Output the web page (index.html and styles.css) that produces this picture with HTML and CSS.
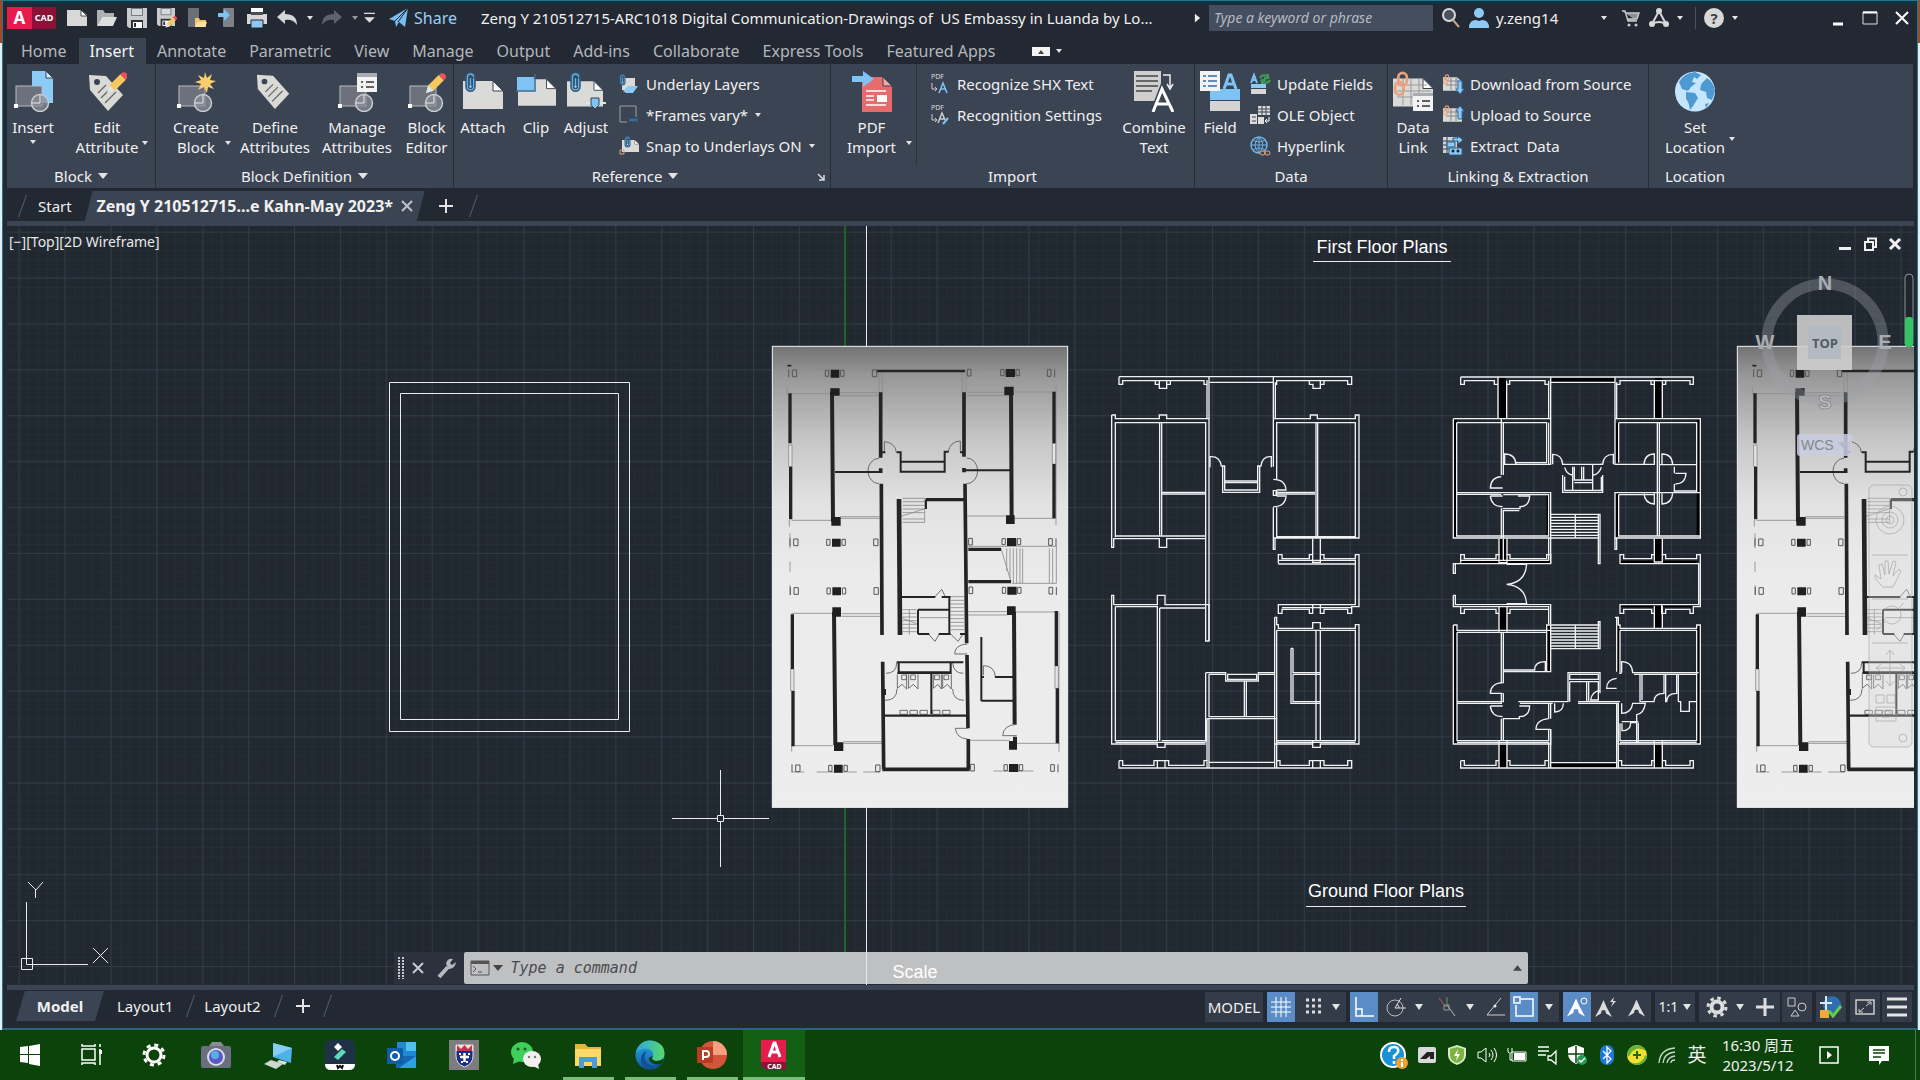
FILE: index.html
```html
<!DOCTYPE html>
<html lang="en">
<head>
    <meta charset="UTF-8">
    <meta name="viewport" content="width=device-width, initial-scale=1.0">
    <title>AutoCAD</title>
    <link rel="stylesheet" href="styles.css">
</head>
<body>
    <!-- shared icon parts -->
    <svg class="defs" aria-hidden="true">
        <defs>
            <symbol id="shapes" viewBox="0 0 40 41">
                <rect x="3" y="15" width="26" height="20" fill="#6c717b" stroke="#b8bcc2"/>
                <circle cx="27" cy="32" r="8.500" fill="#8b8f97" fill-opacity=".75" stroke="#c9ccd1" stroke-width="1.500"/>
                <path d="M27 24v8h-8" fill="none" stroke="#e8e8e8"/>
                <rect x="1" y="33" width="4" height="4" fill="#fff"/>
            </symbol>
            <symbol id="tag" viewBox="0 0 40 41">
                <path d="M2 4l17 1 17 19-15 16L3 19z" fill="#d9d9d6"/>
                <circle cx="10" cy="11" r="3" fill="#3b4453"/>
                <path d="M11 22l8-8M14 27l10-10M18 32l11-11" stroke="#666" stroke-width="1.300"/>
            </symbol>
            <symbol id="pencil" viewBox="0 0 20 20">
                <path d="M1 19l2-7L13 2l5 5L8 17z" fill="#f8c860"/>
                <path d="M13 2l2-1.500q2-1 4 1t.5 4L18 7z" fill="#e8545a"/>
                <path d="M1 19l2-7 5 5z" fill="#d8e6f2"/>
            </symbol>
            <symbol id="sheet" viewBox="0 0 40 30">
                <path d="M0 2h30l10 10v18H0z" fill="#dadad8"/>
                <path d="M30 2v10h10z" fill="#fff" stroke="#3b4453"/>
            </symbol>
            <symbol id="clip" viewBox="0 0 10 20">
                <path d="M8 6v8a3 3 0 0 1-6 0V5a3 3 0 0 1 6 0M5 6v7" fill="none" stroke="#2e5b80" stroke-width="4"/>
                <path d="M8 6v8a3 3 0 0 1-6 0V5a3 3 0 0 1 6 0M5 6v7" fill="none" stroke="#79b4e2" stroke-width="1"/>
            </symbol>
            <symbol id="chain" viewBox="0 0 16 24">
                <rect x="5" y="1.500" width="8" height="12" rx="4" fill="none" stroke="#e9a27b" stroke-width="2.500"/>
                <rect x="2" y="10" width="8" height="12" rx="4" fill="none" stroke="#e9a27b" stroke-width="2.500"/>
            </symbol>
            <symbol id="floppy" viewBox="0 0 20 20">
                <path d="M0 0h20v20H2l-2-2z" fill="#c9cbcc"/>
                <path d="M4 0h12v8H4z" fill="#777c82"/>
                <path d="M5 1h10v6H5z" fill="#d8d8d8"/>
                <path d="M4 12h12v8H4z" fill="#2b313b"/>
                <path d="M6 14h9v6H6z" fill="#fff"/>
                <path d="M7 15h2v4H7z" fill="#2b313b"/>
            </symbol>
            <symbol id="person" viewBox="0 0 20 20">
                <path d="M10 0l4 9 6 11-7-4-1-4H8l-1 4-7 4L6 9z"/>
            </symbol>

            <linearGradient id="shade" x1="0" y1="0" x2="0" y2="1">
                <stop offset="0" stop-color="#737373"/>
                <stop offset=".06" stop-color="#969696"/>
                <stop offset=".2" stop-color="#c6c6c6"/>
                <stop offset=".34" stop-color="#e2e2e2"/>
                <stop offset=".5" stop-color="#ebebeb"/>
                <stop offset="1" stop-color="#ededed"/>
            </linearGradient>
            <linearGradient id="edgeBlue" x1="0" y1="0" x2="0" y2="1">
                <stop offset="0" stop-color="#2ba7e0"/>
                <stop offset="1" stop-color="#0f5bab"/>
            </linearGradient>
            <linearGradient id="edgeGreen" x1="0" y1="0" x2="1" y2="0">
                <stop offset="0" stop-color="#2ba7e0"/>
                <stop offset="1" stop-color="#5bd86a"/>
            </linearGradient>
            <pattern id="minor" x="65" y="277.800" width="9.180" height="9.180" patternUnits="userSpaceOnUse">
                <path d="M.5 0V9.180M0 .5H9.180" stroke="#252d37"/>
            </pattern>
            <pattern id="major" x="64.500" y="277.500" width="45.900" height="45.900" patternUnits="userSpaceOnUse">
                <path d="M.5 0V45.900M0 .5H45.900" stroke="#313a45"/>
            </pattern>

            <g id="piers">
                <path d="M212-11h26v24h-26zM737-13h28v24h-28z" fill="#1f1f1f"/>
                <path d="M196-9h10v18h-10zM242-9h10v18h-10zM97-10h13v20H97zM337-10h13v20h-13zM622-12h11v20h-11zM722-11h10v18h-10zM768-11h10v18h-10zM862-11h11v20h-11zM86-12V12M884-12V12" fill="none" stroke="#555" stroke-width="3"/>
            </g>

            <!-- scanned first floor plan -->
            <g id="scan">
                <rect x="37" y="34" width="886" height="1383" fill="url(#shade)" stroke="#f4f4f4" stroke-width="3"/>
                <path d="M82 92h12" stroke="#222" stroke-width="5"/>
                <g fill="none" stroke="#8a8a8a" stroke-width="2.500">
                    <path d="M155 103h120M310 103h40M670 101h120M840 101h46M82 158v22M88 176h125" />
                    <path d="M240 173h118M240 182h118M622 172h112M622 181h112M765 171h122M888 150v420M88 555v20M90 595v45M90 680v30M90 750v30" />
                    <path d="M241 545h118M241 550h118M622 543h116M95 556h120M765 550h122M357 110v62M367 110v62M607 110v62M618 110v62" />
                    <path d="M86 330h10v65H86zM877 325h10v62h-10zM92 1002h10v66H92zM885 993h10v67h-10z" fill="#e5e5e5"/>
                    <path d="M95 835h125M245 836h116M245 844h116M625 830h116M625 840h116M768 831h125M95 1230v20M100 1232h120M250 1220h118M250 1225h118M632 1216h116M770 1225h130M897 830v420M170 1311h120M310 1311h50M700 1308h120M95 1311h38" />
                    <path d="M623 634h266V745H755M723 640l30 100M740 640v68M750 640v90M760 640v105M770 640v105M780 640v105M788 640v105M868 640v105M878 640v105" />
                    <path d="M428 490h66v72M428 500h66M428 511h66M428 522h66M428 533h66M420 545l75-24M428 552h66M428 562h66" />
                    <path d="M428 824h42M428 835h42M428 846h42M428 857h42M428 868h42M428 879h42M428 890h42M448 824v75M428 850l42 16M572 785h40M572 796h40M572 807h40M572 818h40M572 829h40M572 840h40M572 851h40M572 862h40M572 873h40M572 884h40M480 848h85" />
                </g>
                <g fill="none" stroke="#555" stroke-width="2.500">
                    <path d="M373 350V320A36 34 0 0 1 409 352M601 350V318A36 34 0 0 0 565 350" />
                    <path d="M357 370A33 38 0 0 0 324 408A33 38 0 0 0 357 446M620 369A33 38 0 0 1 653 407A33 38 0 0 1 620 446" />
                    <path d="M525 785l20-22 10 20M505 897l20 22 12-20M572 897l22 22 14-20M622 927q-38 2-38 30h38M378 1015q32 0 32-32M375 1096q36 0 36-34M610 1015q-30 0-32-32M612 1096q-34 0-34-34M622 1180h-36q4 30 36 32M670 1020V992q34 0 36 34M770 1168q-40 2-42 34h42" />
                    <path d="M412 1018v42l14-12 14 14V1018M446 1018v42l14-12 14 14V1018M520 1018v42l14-12 10 14V1018M548 1018v42l14-12 12 14V1018M425 1020h14v14h-14zM452 1020h14v14h-14zM524 1020h14v14h-14zM552 1020h14v14h-14zM420 1126h22v12h-22zM450 1126h22v12h-22zM480 1126h22v12h-22zM518 1126h22v12h-22zM548 1126h22v12h-22z" />
                </g>
                <g fill="none" stroke="#242424">
                    <path d="M90 175V325M92 395V553M882 170V325M882 387V550M97 838V1002M99 1068V1234M889 828V993M892 1060V1225" stroke-width="10"/>
                    <path d="M216 170L219 560M753 160L755 560M222 830L226 1230M762 830L764 1168M765 1205V1235" stroke-width="12"/>
                    <path d="M362 172V368M362 400V414M364 446L366 900M612 172V365M612 399V412M615 446L620 925M621 960L624 1180M625 1212V1303M368 980L371 1303M367 1303H629" stroke-width="11"/>
                    <path d="M350 108H615" stroke-width="8"/>
                    <path d="M417 492L420 900" stroke-width="14"/>
                    <path d="M497 494H612M625 643H723M625 740H753" stroke-width="10"/>
                    <path d="M498 494V522M225 411H360M612 406H750M366 352H376M410 352H422V410H554V350H566M600 352H612M425 380H552M425 786H526M545 786H572M568 786V897M474 824H565M474 824V897M474 897H508M536 897H572M600 897H615M410 982H610M416 982V1012H572V982M412 1014H575M514 1014V1138M664 906V1098M664 1097H760M705 1026H760M664 1026H672M375 1062V1080" stroke-width="6"/>
                    <path d="M372 1142H618" stroke-width="7"/>
                </g>
                <path d="M211 160h28v22h-28zM214 546h28v26h-28zM733 155h28v26h-28zM738 541h26v26h-26zM217 817h26v28h-26zM222 1222h28v26h-28zM741 814h26v26h-26zM747 1218h24v26h-24z" fill="#1f1f1f"/>
                <use href="#piers" y="115"/>
                <use href="#piers" x="4" y="622"/>
                <use href="#piers" x="5" y="768"/>
                <use href="#piers" x="10" y="1300"/>
            </g>
        </defs>
    </svg>

    <div class="desktop">
        <div class="window">
            <div class="window-edge"></div>

            <header class="titlebar">
                <button class="app-logo" aria-label="Application menu"><span class="app-a">A</span><span class="app-cad">CAD</span></button>
                <div class="quick-access">
                    <button aria-label="New"><svg viewBox="0 0 20 20"><path d="M0 2h14l6 5v11H0z" fill="#d8d8d6"/><path d="M14 2v6h6z" fill="#fff" stroke="#222933" stroke-width=".8"/></svg></button>
                    <button aria-label="Open"><svg viewBox="0 0 20 20"><path d="M0 18V2h6l2 3h9v4H5z" fill="#aeb1b3"/><path d="M5 9h15l-4 9H0z" fill="#dedede"/></svg></button>
                    <button aria-label="Save"><svg viewBox="0 0 20 20"><use href="#floppy"/></svg></button>
                    <button aria-label="Save as"><svg viewBox="0 0 20 20"><use href="#floppy" width="18" height="18"/><use href="#pencil" x="8" y="8" width="12" height="12"/></svg></button>
                    <button aria-label="Open from mobile"><svg viewBox="0 0 20 20"><rect x="1" width="11" height="19" rx="1" fill="#6b7077"/><path d="M8 19v-9h4l1 2h6v7z" fill="#f0c46a"/><path d="M10 14h10l-2 5H8z" fill="#ffe0a0"/></svg></button>
                    <button aria-label="Save to mobile"><svg viewBox="0 0 20 20"><rect x="6" width="11" height="19" rx="1" fill="#7d8288"/><path d="M1 5h6V1l6 6-6 6V9H1z" fill="#7cc4f5"/></svg></button>
                    <button aria-label="Plot"><svg viewBox="0 0 20 20"><path d="M4 0h12v5H4z" fill="#fff"/><path d="M0 6h20v10H0z" fill="#d6d6d6"/><path d="M4 4h12v3H4z" fill="#4a4f57"/><path d="M4 12h12v8H4z" fill="#8fc8f2" stroke="#222933"/></svg></button>
                    <button aria-label="Undo"><svg viewBox="0 0 20 20"><path d="M8 2v4q12 0 12 11-4-6-12-5v4L0 9z" fill="#d4d6d8"/></svg></button>
                    <button class="slim" aria-label="Undo list"><span class="caret"></span></button>
                    <button aria-label="Redo"><svg viewBox="0 0 20 20"><path d="M12 2v4Q0 6 0 17q4-6 12-5v4l8-7z" fill="#5d636c"/></svg></button>
                    <button class="slim dim" aria-label="Redo list"><span class="caret"></span></button>
                    <button class="slim" aria-label="Customize"><svg viewBox="0 0 12 12"><path d="M0 1h12M2 6h8l-4 4z" fill="#ddd" stroke="#ddd" stroke-width="1.500"/></svg></button>
                </div>
                <button class="share"><svg viewBox="0 0 20 20"><path d="M0 11L19 0l-3 19-6-5-3 5-1-6z" fill="#79bdf0"/><path d="M6 13L19 0 9 14" fill="none" stroke="#222933"/></svg>Share</button>
                <h1 class="doc-title">Zeng Y 210512715-ARC1018 Digital Communication-Drawings of&nbsp; US Embassy in Luanda by Lo...</h1>
                <div class="title-tools">
                    <button class="slim" aria-label="Collapse search"><svg viewBox="0 0 8 12"><path d="M1 1l6 5-6 5z" fill="#eee"/></svg></button>
                    <input class="search" type="text" aria-label="Search" placeholder="Type a keyword or phrase">
                    <button aria-label="Find"><svg viewBox="0 0 20 20"><circle cx="8" cy="7" r="6" fill="#4c525c" stroke="#d8d8d8" stroke-width="2"/><path d="M12 12l6 7" stroke="#c9a58c" stroke-width="2"/></svg></button>
                    <button class="account"><svg viewBox="0 0 20 20"><circle cx="10" cy="5" r="5" fill="#8ec9f6"/><path d="M0 20q0-8 7-8l3 1 3-1q7 0 7 8z" fill="#8ec9f6"/></svg>y.zeng14<span class="caret"></span></button>
                    <button aria-label="App store"><svg viewBox="0 0 20 20"><path d="M1 3h3l3 10h9M5 5h13l-2 6H7" fill="#8d9095" stroke="#c5c7c9" stroke-width="1.500"/><circle cx="8" cy="17" r="1.500" fill="#ccc"/><circle cx="15" cy="17" r="1.500" fill="#ccc"/></svg></button>
                    <button class="with-caret" aria-label="Autodesk app"><svg viewBox="0 0 20 20"><path d="M10 3l7 13q-7-4-14 0z" fill="none" stroke="#d8d8d8" stroke-width="2"/><circle cx="10" cy="3" r="3" fill="#d8d8d8"/><circle cx="3" cy="16" r="3" fill="#d8d8d8"/><circle cx="17" cy="16" r="3" fill="#d8d8d8"/></svg><span class="caret"></span></button>
                    <span class="divider"></span>
                    <button class="with-caret help" aria-label="Help"><span class="help-dot">?</span><span class="caret"></span></button>
                </div>
                <div class="window-buttons">
                    <button aria-label="Minimize"><svg viewBox="0 0 16 16"><path d="M3 14h10" stroke="#fff" stroke-width="3"/></svg></button>
                    <button aria-label="Maximize"><svg viewBox="0 0 16 16"><path d="M1 2h14v12H1z" fill="none" stroke="#ddd"/><path d="M1 2.500h14" stroke="#fff" stroke-width="2"/></svg></button>
                    <button aria-label="Close"><svg viewBox="0 0 16 16"><path d="M2 2l12 12M14 2L2 14" stroke="#fff" stroke-width="2"/></svg></button>
                </div>
            </header>

            <nav class="ribbon-tabs">
                <button>Home</button>
                <button class="active">Insert</button>
                <button>Annotate</button>
                <button>Parametric</button>
                <button>View</button>
                <button>Manage</button>
                <button>Output</button>
                <button>Add-ins</button>
                <button>Collaborate</button>
                <button>Express Tools</button>
                <button>Featured Apps</button>
                <button class="ribbon-toggle" aria-label="Minimize ribbon"><svg viewBox="0 0 18 9"><path d="M0 0h18v9H0z" fill="#f4f4f4"/><path d="M6 7l3-4 3 4z" fill="#444"/></svg><span class="caret"></span></button>
            </nav>

            <div class="ribbon">
                <section class="panel panel-block">
                    <div class="panel-body">
                        <button class="big"><svg viewBox="0 0 40 41"><path d="M19 0h14l7 7v25H19z" fill="#8ccbf7"/><path d="M33 0v7h7z" fill="#d8eefc" stroke="#3b4453"/><use href="#shapes" width="40" height="41"/></svg><span>Insert</span><span class="caret"></span></button>
                        <button class="big"><svg viewBox="0 0 40 41"><use href="#tag"/><use href="#pencil" x="19" y="1" width="22" height="22"/></svg><span>Edit<br>Attribute<i class="caret side"></i></span></button>
                    </div>
                    <h2>Block <span class="caret wide"></span></h2>
                </section>
                <section class="panel panel-definition">
                    <div class="panel-body">
                        <button class="big"><svg viewBox="0 0 40 41"><use href="#shapes"/><path d="M29 1l2 6 5-4-2 6 6 1-6 3 4 5-6-2-1 6-3-6-6 3 3-6-6-2 6-2-3-5 6 3z" fill="#f9cf6b"/></svg><span>Create<br>Block<i class="caret side far"></i></span></button>
                        <button class="big"><svg viewBox="0 0 40 41"><use href="#tag" width="38" height="39"/></svg><span>Define<br>Attributes</span></button>
                        <button class="big"><svg viewBox="0 0 40 41"><use href="#shapes"/><path d="M20 2h20v19H20z" fill="#f3f3f3"/><path d="M20 2h20v4H20z" fill="#a9adb2"/><path d="M24 11h2M24 16h2M29 11h8M29 16h8" stroke="#333" stroke-width="1.500"/></svg><span>Manage<br>Attributes</span></button>
                        <button class="big"><svg viewBox="0 0 40 41"><use href="#shapes"/><use href="#pencil" x="18" y="2" width="21" height="21"/></svg><span>Block<br>Editor</span></button>
                    </div>
                    <h2>Block Definition <span class="caret wide"></span></h2>
                </section>
                <section class="panel panel-reference">
                    <div class="panel-body">
                        <button class="big"><svg viewBox="0 0 40 41"><use href="#sheet" y="8" width="40" height="30"/><use href="#clip" x="2" y="1" width="11" height="21"/></svg><span>Attach</span></button>
                        <button class="big"><svg viewBox="0 0 40 41"><use href="#sheet" x="2" y="6" width="38" height="29"/><path d="M1 6h17v14H1z" fill="#7fc3f5"/><path d="M0 20h19V3" fill="none" stroke="#3b6d97" stroke-width="1.500"/></svg><span>Clip</span></button>
                        <button class="big"><svg viewBox="0 0 40 41"><use href="#sheet" x="1" y="8" width="36" height="28"/><use href="#clip" x="4" y="1" width="11" height="21"/><path d="M20 32h20" stroke="#dfe6ec" stroke-width="2"/><path d="M25 27h8v7l-4 4-4-4z" fill="#7fc3f5" stroke="#3b4453"/></svg><span>Adjust</span></button>
                        <div class="rows">
                            <button><svg viewBox="0 0 20 20"><path d="M3 4h13v12H3z" fill="#dadad8"/><path d="M4 17l5-5h10l-5 7H7z" fill="#8ccbf7"/><use href="#clip" width="7" height="12"/></svg>Underlay Layers</button>
                            <button><svg viewBox="0 0 20 20"><path d="M1 1h16v11M1 1v16h7" fill="none" stroke="#9a9fa8"/><path d="M10 17q4-6 9 0M10 13q4 6 9 0" fill="none" stroke="#2f7ec0"/></svg>*Frames vary*<span class="caret"></span></button>
                            <button><svg viewBox="0 0 20 20"><use href="#sheet" x="3" y="3" width="17" height="13"/><use href="#clip" x="5" width="7" height="12"/><path d="M1 14h4v4H1z" fill="none" stroke="#e0a080"/></svg>Snap to Underlays ON<span class="caret"></span></button>
                        </div>
                    </div>
                    <h2>Reference <span class="caret wide"></span><svg class="launcher" viewBox="0 0 8 8"><path d="M1 1l5 5M7 2v5H2" fill="none" stroke="#ddd" stroke-width="1.500"/></svg></h2>
                </section>
                <section class="panel panel-import">
                    <div class="panel-body">
                        <button class="big lined"><svg viewBox="0 0 40 41"><path d="M10 6h21l9 9v26H10z" fill="#e56b6d"/><path d="M31 6v9h9z" fill="#f2a5a4" stroke="#3b4453"/><path d="M14 20h20M14 34h20M14 25h8M14 29h8" stroke="#fff" stroke-width="1.500"/><path d="M25 24h10v7H25z" fill="#fff"/><path d="M0 5h11V0l11 8-11 8v-5H0z" fill="#7fc3f5"/></svg><span>PDF<br>Import<i class="caret side far"></i></span></button>
                        <div class="rows">
                            <button><svg viewBox="0 0 20 20"><text class="icon-pdf" x="1" y="5">PDF</text><path d="M2 9v6h5M5 13l2 2-2 2" fill="none" stroke="#ccc"/><path d="M9 19l4-10 4 10M11 15h5" fill="none" stroke="#7fc3f5" stroke-width="1.500"/></svg>Recognize SHX Text</button>
                            <button><svg viewBox="0 0 20 20"><text class="icon-pdf" x="1" y="5">PDF</text><path d="M2 9v6h5M5 13l2 2-2 2" fill="none" stroke="#ccc"/><path d="M8 18l4-10 3 7M10 14h5" fill="none" stroke="#ccc" stroke-width="1.500"/><path d="M13 19l5-6" stroke="#7fc3f5" stroke-width="2"/></svg>Recognition Settings</button>
                        </div>
                        <button class="big"><svg viewBox="0 0 40 41"><path d="M0 0h27v30H0z" fill="#cfcfcd"/><path d="M2 5h22M2 10h22M2 15h22M2 20h16" stroke="#444" stroke-width="1.500"/><path d="M29 4h7v12M33 13l3 5 3-5" fill="none" stroke="#eee" stroke-width="1.500"/><path d="M19 41l9-23 11 23M22 33h13" fill="none" stroke="#3b4453" stroke-width="6"/><path d="M19 41l9-23 11 23M22 33h13" fill="none" stroke="#fff" stroke-width="3"/></svg><span>Combine<br>Text</span></button>
                    </div>
                    <h2>Import</h2>
                </section>
                <section class="panel panel-data">
                    <div class="panel-body">
                        <button class="big"><svg viewBox="0 0 40 41"><path d="M10 18h30v11H10z" fill="#7fc3f5"/><path d="M10 30h30v10H10z" fill="#d4d4d2"/><path d="M0 0h20v20H0z" fill="#f3f3f3"/><path d="M3 5h3M3 10h3M3 15h3M8 5h9M8 10h9M8 15h9" stroke="#2e6fae" stroke-width="1.500"/><path d="M24 18l5-14h2l5 14M26 13h8" fill="none" stroke="#7fc3f5" stroke-width="3"/></svg><span>Field</span></button>
                        <div class="rows">
                            <button><svg viewBox="0 0 20 20"><path d="M1 9l3-8 3 8M2 6h4" fill="none" stroke="#7fc3f5" stroke-width="2"/><path d="M1 10h15v4H1z" fill="#8ccbf7"/><path d="M1 15h15v5H1z" fill="#d8d8d8"/><path d="M19 4a5 5 0 0 0-9 0M11 6a5 5 0 0 0 9 0M18 0v4h-4M12 10V6h4" fill="none" stroke="#3f9a55" stroke-width="2"/></svg>Update Fields</button>
                            <button><svg viewBox="0 0 20 20"><path d="M8 1h12v9H8zM0 9h7v10H0zM8 12h6v7H8z" fill="#dcdcda"/><path d="M8 4h12M8 7h12M12 1v9M16 1v9M2 12h4M2 16h4" stroke="#3b4453"/><path d="M19 12v4h-4M17 14l-2 2 2 2" fill="none" stroke="#fff"/></svg>OLE Object</button>
                            <button><svg viewBox="0 0 20 20"><circle cx="9" cy="9" r="8" fill="none" stroke="#6fb2e6" stroke-width="1.500"/><path d="M1 9h16M9 1v16M3 4q6 4 12 0M3 14q6-4 12 0M9 1q-8 8 0 16M9 1q8 8 0 16" fill="none" stroke="#6fb2e6"/><rect x="10" y="15" width="5" height="4" rx="2" fill="#3b4453" stroke="#e9a27b"/><rect x="15" y="15" width="5" height="4" rx="2" fill="none" stroke="#e9a27b"/></svg>Hyperlink</button>
                        </div>
                    </div>
                    <h2>Data</h2>
                </section>
                <section class="panel panel-linking">
                    <div class="panel-body">
                        <button class="big"><svg viewBox="0 0 40 41"><use href="#sheet" y="5" width="40" height="31"/><path d="M4 14h30M4 20h34M4 26h34M10 8v26M18 8v26M26 8v26" stroke="#999"/><use href="#chain" width="17" height="26"/><path d="M20 22h20v18H20z" fill="#f3f3f3"/><path d="M20 22h20v3H20z" fill="#a9adb2"/><path d="M24 30h2M24 35h2M29 30h8M29 35h8" stroke="#333" stroke-width="1.500"/></svg><span>Data<br>Link</span></button>
                        <div class="rows">
                            <button><svg viewBox="0 0 20 20"><use href="#sheet" y="2" width="19" height="15"/><path d="M3 7h14M3 11h14M8 4v12M13 4v12" stroke="#888"/><use href="#chain" width="7" height="11"/><path d="M15 7h4v8h2l-4 5-4-5h2z" fill="#8ccbf7" stroke="#2e6fae"/></svg>Download from Source</button>
                            <button><svg viewBox="0 0 20 20"><use href="#sheet" y="2" width="19" height="15"/><path d="M3 7h14M3 11h14M8 4v12M13 4v12" stroke="#888"/><use href="#chain" width="7" height="11"/><path d="M15 14h4V6h2l-4-5-4 5h2z" fill="#8ccbf7" stroke="#2e6fae"/></svg>Upload to Source</button>
                            <button><svg viewBox="0 0 20 20"><path d="M0 1h14v16H0z" fill="#cfd4d8"/><path d="M0 5h12M0 9h6M0 13h6M4 1v16" stroke="#3b4453"/><path d="M10 2h5V0l5 4-5 4V5h-5zM4 6h8v5H4zM6 12h13v7H6z" fill="#8ccbf7" stroke="#2e5b80"/><circle cx="10" cy="15" r="1.500" fill="#222"/><circle cx="15" cy="15" r="1.500" fill="#222"/></svg>Extract&nbsp; Data</button>
                        </div>
                    </div>
                    <h2>Linking &amp; Extraction</h2>
                </section>
                <section class="panel panel-location">
                    <div class="panel-body">
                        <button class="big"><svg viewBox="0 0 40 41"><circle cx="20" cy="20.500" r="20" fill="#c6e6fb"/><path d="M4 11Q9 2 20 1l6 3-4 4-3-2-2 5 4 1-5 4-3 4-6-2zM11 21l9 1 3 5-5 8-3 4q-1-8-4-11zM27 12l5-5q7 5 8 13l-3 9-5-2-1-6-6-2 1-5zM30 33l4-1-3 5z" fill="#4d9ad3"/></svg><span>Set<br>Location<i class="caret side up"></i></span></button>
                    </div>
                    <h2>Location</h2>
                </section>
            </div>

            <nav class="file-tabs">
                <span class="slash"></span>
                <button>Start</button>
                <button class="active"><span>Zeng Y 210512715...e Kahn-May 2023*</span><svg viewBox="0 0 12 12"><path d="M1 1l10 10M11 1L1 11" stroke="#bfc3c9" stroke-width="2"/></svg></button>
                <button class="add" aria-label="New drawing"><svg viewBox="0 0 16 16"><path d="M8 1v14M1 8h14" stroke="#e4e4e4" stroke-width="2"/></svg></button>
                <span class="slash"></span>
            </nav>

            <main class="canvas">
                <svg class="layer" aria-hidden="true">
                    <g transform="translate(-7 -226)">
                        <rect width="4000" height="3000" fill="url(#minor)"/>
                        <rect width="4000" height="3000" fill="url(#major)"/>
                    </g>
                </svg>

                <div class="command-line">
                    <svg class="grip" viewBox="0 0 6 22"><path d="M1 0v22M5 0v22" stroke="#c8cacd" stroke-width="2" stroke-dasharray="2 1"/></svg>
                    <button aria-label="Close command line"><svg viewBox="0 0 12 12"><path d="M1 1l10 10M11 1L1 11" stroke="#c8cacd" stroke-width="2"/></svg></button>
                    <button aria-label="Customize command line"><svg viewBox="0 0 20 20"><path d="M2 19l9-10" stroke="#b4b7bb" stroke-width="4"/><path d="M19 4l-4 3-2-2 3-4q-6-1-7 5l3 5q6 0 7-7z" fill="#b4b7bb"/></svg></button>
                    <div class="command-box">
                        <button aria-label="Recent commands"><svg viewBox="0 0 20 16"><path d="M1 1h18v14H1z" fill="none" stroke="#555"/><path d="M1 1h18v3H1z" fill="#555"/><path d="M3 6l3 3-3 3M8 12h4" fill="none" stroke="#555"/></svg><span class="caret"></span></button>
                        <input type="text" aria-label="Command" placeholder="Type a command">
                        <button aria-label="Command history"><svg class="tiny" viewBox="0 0 10 6"><path d="M0 6l5-6 5 6z" fill="#444"/></svg></button>
                    </div>
                </div>

                <svg class="layer drawing">
                    <g transform="translate(-7 -226)">
                        <path d="M845 226V952" stroke="#1c6527" stroke-width="2"/>
                        <g fill="none" stroke="#e8eaec">
                            <path d="M389.500 382.500h240v349h-240zM400.500 393.500h218v326h-218z"/>
                            <path d="M866.500 226V985M672 818.500h45M724 818.500h45M720.500 770v45M720.500 822v45M717.500 815.500h6v6h-6z"/>
                            <path d="M26.500 902V964.500H88M21.500 958.500h11v11h-11zM28 882l8 8 7-8M35.500 890v8M93 948l15 15M108 948l-15 15"/>
                            <path d="M1313 261.500h138M1306 906.500h160"/>
                        </g>
                        <text class="note" x="1382" y="253">First Floor Plans</text>
                        <text class="note" x="1386" y="897">Ground Floor Plans</text>
                        <text class="note" x="915" y="978">Scale</text>
                        <text class="view-label" x="9" y="247">[−][Top][2D Wireframe]</text>

                        <use href="#scan" transform="translate(760 335) scale(.33333)"/>
                        <use href="#scan" transform="translate(1725 335) scale(.33333)"/>

                        <!-- first floor, traced walls -->
                        <g transform="translate(1100 360) scale(.33333)" fill="none" stroke="#f0f1f3" stroke-width="4">
                            <path d="M57 50H755V73H743V62H530V73H525M57 50V73H68V62H312V73H322M328 67H520M166 62V73H178M178 62V85H200V62M200 73H211V62M628 62V73H639V85H661V62M661 73H672V62"/>
                            <path d="M321 60V176M327 50V176M520 50V176M526 67V176"/>
                            <path d="M35 165H46V176H178V165H200V176H327V843H317V188H46V532M35 165V562H41V536H178V562H200V536H317M46 528H317M179 188V528M185 188V528M185 397H317M185 402H317"/>
                            <path d="M520 176H631V165H652V176H766V165H777V534H520M520 176V320M530 358V188H766V530H530V442M520 442V568H525V534M648 188V530M653 188V530M526 397H645M526 402H645M520 392H530V406H520z"/>
                            <path d="M330 322V290Q360 288 364 318H374V390H473V318H483Q486 288 514 290V322M368 318V397H479V318M374 363H473M374 368H473"/>
                            <path d="M520 358Q556 358 558 390H530M530 408H558Q556 440 520 440"/>
                            <path d="M535 610V584H546V596H628V584H638V607H661V584H672V596H766V584H777V740H755V760H743V748H672V760H661V736M638 536V584M661 536V584M535 601H766V734H535V760H546V748H628V760H638V736M535 612H766M546 743H755"/>
                            <path d="M41 734V706H35V1152H172V1162H195V1152H317M41 734H172V706H195V734H327V843M46 740H172V1142H46V740M179 744V1142M179 744H317M185 1142H317M46 1147H317"/>
                            <path d="M57 1202H68V1216H162V1202H206V1216H312V1202H322M57 1202V1224H755V1202H743V1216H672V1202H628V1216H540V1202H530M172 1202V1224H195V1202M638 1202V1224H661V1202"/>
                            <path d="M317 938H377V963H475V938H524M317 938V1145M327 943H377M383 943H470V958H383zM475 943H524M327 943V1070H524M321 1076H530M433 965V1070M439 965V1070M321 1076V1224M327 1076V1224M327 1207H524"/>
                            <path d="M524 772H530V794H535V805H638V788H661V805H766V794H777V1152H661V1162H638V1152H524M524 772V1224M530 811V1142H766V811H530M648 811V1142M661 811V1142M530 1142V1224M530 1147H766"/>
                            <path d="M573 865V1030H661M579 865V938H661M579 943H661M579 943V1025H661M573 865H579M638 1142V1152"/>
                        </g>

                        <!-- first floor, furnished variant -->
                        <g transform="translate(1440 360) scale(.33333)" fill="none" stroke="#f0f1f3" stroke-width="4">
                            <path d="M176 52h22v124h-22zM645 52h20v124h-20zM179 536h20v72h-20zM645 536h20v70h-20zM179 738h20v77h-20zM645 738h20v67h-20zM179 1142h20v82h-20zM645 1142h20v82h-20zM332 52H525v14H332zM332 1208H530v14H332zM320 188h10v125h-10zM526 188h10v120h-10zM320 400h10v130h-10zM526 400h10v130h-10zM41 180h10v350H41zM770 180h10v350h-10zM41 795h10v355H41zM770 795h10v355h-10zM320 795h10v140h-10zM530 795h10v140h-10zM62 602H330v8H62zM540 602H770v8H540zM62 734H330v8H62zM540 734H770v8H540z" fill="#000" stroke="none"/>
                            <path d="M62 51H760V73H750V62H540V73H530M62 51V73H73V62H163V73H174M198 73H209V62H315V73H325M633 62V73H643M667 73H677V62H750M332 67H525M174 51V176M200 62V176M326 62V176M332 51V176M525 51V176M530 67V176M643 62V176M667 62V176"/>
                            <path d="M40 176H332V313H190M40 176V534H332V398H50M50 188H320V308H225M50 188V528H326V404H190M184 176V345M190 188V345M184 445V534M190 450V534M50 403H184M326 313V188"/>
                            <path d="M525 176H781V534H525V398H781M525 176V313H645M536 188H770V398M536 188V308M536 404H645M536 404V528H781M652 188V528M658 188V528M658 314H770M703 320V340M703 372V398M703 393H770"/>
                            <path d="M194 313V282Q226 282 228 313M338 313V283Q366 283 368 313H374M184 350Q152 352 151 384H188M151 408H188M151 408Q154 440 188 440M188 446H240V440Q268 440 269 408H234M188 452H238M520 313V283Q490 283 488 313H480M643 313V282Q614 282 612 313M666 313V282Q696 282 698 313M643 400V432Q614 430 612 400M666 400V432Q696 430 698 400M706 340H738Q736 372 706 372"/>
                            <path d="M368 313H488M368 345V397H488V345M374 350V391H484V350M398 320V391M403 320V360H458V320M403 368H458V391M425 320V360M431 320V360M458 313V391M374 322Q380 344 398 345M484 322Q476 344 460 345"/>
                            <path d="M332 463H480V611H475V463M332 472H475M332 481H475M332 490H475M332 499H475M332 508H475M332 517H475M332 526H475M332 534H475M406 463V534M525 534V568H530V534M326 534V602M332 534V610M190 536V602M177 536V608H201V536M643 536V606H667V536"/>
                            <path d="M62 608V584H73V596H168V584H179M200 584H210V596H320V584H332V611H40V640H46V611M62 601H326M540 611V584H551V596H635V584H645M665 584H677V596H770V584H781V740H760V760H750V748H677V760H665V736M540 611H776V734H540V760H551V748H635V760H645"/>
                            <path d="M40 706H46V734H332V793M40 706V740H326V793M62 740V760H73V748H168V760H177V738V815M201 738V815V760H210V748H326M643 738V805M667 738V805M200 613H260Q256 668 200 673Q256 678 260 731H200"/>
                            <path d="M40 795H51V811H332V795H320V935H190M40 795V1152H332V1108M51 817H320V900M51 817V1142H326V1108M184 817V970M190 817V970M190 930H284Q284 905 316 905V935H332V811M184 1000V1030H51M190 1000V1025H51"/>
                            <path d="M332 795H480V785H475V866M332 804H475M332 813H475M332 822H475M332 831H475M332 840H475M332 849H475M332 858H475M332 866H480V785M406 795V866M525 772H535V795H540V805H770V795H781V1152H535V1030M530 772V935M540 811H770V1142H540V1090M540 811V940H545"/>
                            <path d="M188 968Q152 970 151 1000H188M151 1038H188M151 1038Q154 1070 188 1070M188 1076H238V1070Q268 1070 269 1038H238M235 1025H384V938H480V1000M240 1030H338M326 1030V1076M332 1030V1076M326 1076Q288 1080 288 1108H330M344 1030V1056Q370 1056 370 1030M389 943H475V958H389zM389 965H475V1020H452Q456 995 478 992M389 965V1025M440 965V1025M446 965V1025M414 1025H540M414 1030H535V1224M530 1030V1224M332 1108V1224M326 1145V1224M190 1076V1142M184 1076V1142"/>
                            <path d="M530 955Q500 958 500 985H530M545 938V905Q576 905 578 938H776M582 943H770M600 943V1025H642Q642 1000 672 1000V943M606 943V1020M677 943V1025H680Q680 1000 710 1000V943M715 943V1025M715 1025H722V1054H748V1025H770M545 1030V1060Q574 1060 578 1030H616Q612 1060 590 1064V1088H572Q572 1112 546 1112V1090M590 1150V1088M595 1150V1088M545 1085H595"/>
                            <path d="M62 1202H73V1216H168V1202H179M200 1202H210V1216H315V1202H326M62 1202V1224H760V1202H750V1216H677V1202H665M645 1202H635V1216H545V1202H535M332 1208H530M177 1142V1224M201 1142V1224M643 1142V1224M667 1142V1224M51 1147H326M540 1147H770"/>
                        </g>
                    </g>
                </svg>

                <div class="view-buttons">
                    <button aria-label="Minimize view"><svg viewBox="0 0 14 14"><path d="M1 11.500h12" stroke="#f0f0f0" stroke-width="3"/></svg></button>
                    <button aria-label="Restore view"><svg viewBox="0 0 14 14"><path d="M2 5h8v8H2zM5 4V1.500h8V10h-2" fill="none" stroke="#f0f0f0" stroke-width="2"/></svg></button>
                    <button aria-label="Close view"><svg viewBox="0 0 14 14"><path d="M2 2l10 10M12 2L2 12" stroke="#f0f0f0" stroke-width="3"/></svg></button>
                </div>

                <svg class="view-cube" viewBox="0 0 160 520">
                    <circle cx="71" cy="69" r="58" fill="none" stroke="#9aa0a8" stroke-opacity=".38" stroke-width="11"/>
                    <rect x="43" y="42" width="55" height="55" fill="#d0d0d0" fill-opacity=".88"/>
                    <rect x="54" y="53" width="33" height="33" fill="#b3bac1"/>
                    <text class="cube-top" x="71" y="75">TOP</text>
                    <text class="compass" x="71" y="17">N</text>
                    <text class="compass" x="11" y="76">W</text>
                    <text class="compass" x="131" y="76">E</text>
                    <text class="compass outlined" x="71" y="136">S</text>
                    <rect x="43" y="161" width="55" height="22" rx="3" fill="#c9cce0" fill-opacity=".85"/>
                    <text class="wcs" x="47" y="177">WCS</text>
                    <path d="M84 169h10l-5 6z" fill="#b6b9cc"/>
                    <rect x="151" y="1" width="8" height="73" rx="4" fill="#20242b" stroke="#8d9096"/>
                    <rect x="151" y="44" width="8" height="30" rx="3" fill="#35c463"/>
                    <!-- faded navigation bar -->
                    <g fill="none" stroke="#8f8f8f" stroke-opacity=".5">
                        <rect x="115" y="212" width="43" height="262" rx="5" fill="#dcdcdc" fill-opacity=".35"/>
                        <circle cx="149" cy="219" r="4"/>
                        <circle cx="136" cy="247" r="14"/><circle cx="136" cy="247" r="8"/><circle cx="136" cy="247" r="4"/>
                        <path d="M118 282h36M118 326h36M118 370h36"/>
                        <path d="M129 314q-9-8-8-12l6 4-2-14 3-1 3 11v-14h3l1 13 4-13 3 1-3 14 6-7 2 2-8 16z"/>
                        <circle cx="138" cy="342" r="9"/><path d="M131 349l-8 8M144 336l6-6"/>
                        <path d="M136 378v34M123 395h28M132 382l4-5 4 5M132 408l4 5 4-5M127 391l-5 4 5 4M146 391l5 4-5 4"/>
                        <path d="M122 422h8v8h-8zM133 422h8v8h-8zM122 434h20v14h-20zM128 438h8v6h-8z"/>
                        <circle cx="149" cy="465" r="4"/>
                    </g>
                </svg>
            </main>

            <footer class="status">
                <nav class="layout-tabs">
                    <button class="active"><span>Model</span></button>
                    <button>Layout1</button>
                    <span class="slash"></span>
                    <button>Layout2</button>
                    <span class="slash"></span>
                    <button class="add" aria-label="New layout"><svg viewBox="0 0 16 16"><path d="M8 1v14M1 8h14" stroke="#e4e4e4" stroke-width="2"/></svg></button>
                    <span class="slash"></span>
                </nav>
                <div class="status-tools">
                    <button class="text">MODEL</button>
                    <button class="on" aria-label="Grid"><svg viewBox="0 0 22 22"><path d="M6 1v20M11 1v20M16 1v20M1 6h20M1 11h20M1 16h20" stroke="#fff"/></svg></button>
                    <button class="drop" aria-label="Snap"><svg viewBox="0 0 22 22"><path d="M4 4h16M4 10h16M4 16h16" stroke="#ddd" stroke-width="3" stroke-dasharray="3 3"/></svg><span class="caret"></span></button>
                    <button class="on" aria-label="Ortho"><svg viewBox="0 0 22 22"><path d="M3 1v19h18M3 13h6v7" fill="none" stroke="#fff" stroke-width="1.500"/></svg></button>
                    <button class="drop" aria-label="Polar tracking"><svg viewBox="0 0 22 22"><circle cx="10" cy="12" r="8" fill="none" stroke="#bbb"/><path d="M10 12L16 2M10 12h11M14 12q0-2-2-4" fill="none" stroke="#ddd"/></svg><span class="caret"></span></button>
                    <button class="drop" aria-label="Isodraft"><svg viewBox="0 0 22 22"><path d="M11 9l8 11" stroke="#bbb"/><path d="M11 1v10" stroke="#5b9a5b"/><path d="M3 2l7 9" stroke="#c05a5a"/><path d="M8 9h5v5H8z" fill="none" stroke="#999"/></svg><span class="caret"></span></button>
                    <button aria-label="Snap tracking"><svg viewBox="0 0 22 22"><path d="M17 2L3 19h18" fill="none" stroke="#ccc"/><circle cx="11" cy="10" r="1.500" fill="#eee"/></svg></button>
                    <button class="on" aria-label="Object snap"><svg viewBox="0 0 22 22"><path d="M8 3h12v17H3V9" fill="none" stroke="#fff" stroke-width="1.500"/><path d="M1 1h6v6H1z" fill="none" stroke="#fff" stroke-width="1.500"/></svg></button>
                    <button class="slim" aria-label="Object snap list"><span class="caret"></span></button>
                    <button class="on" aria-label="Annotation visibility"><svg viewBox="0 0 22 22"><use href="#person" x="1" y="2" width="18" height="19" fill="#fff"/><circle cx="18" cy="5" r="3" fill="none" stroke="#fff"/></svg></button>
                    <button aria-label="Auto scale"><svg viewBox="0 0 22 22"><use href="#person" y="4" width="17" height="17" fill="#ddd"/><path d="M19 1l-4 5h3l-2 5 5-6h-3z" fill="#ddd"/></svg></button>
                    <button aria-label="Annotation scale"><svg viewBox="0 0 22 22"><use href="#person" x="3" y="3" width="17" height="18" fill="#ddd"/></svg></button>
                    <button class="text scale">1:1<span class="caret"></span></button>
                    <button class="drop" aria-label="Workspace"><svg viewBox="0 0 22 22"><circle cx="11" cy="11" r="5.500" fill="none" stroke="#ddd" stroke-width="4"/><circle cx="11" cy="11" r="9" fill="none" stroke="#ddd" stroke-width="3" stroke-dasharray="3.500 3.570"/></svg><span class="caret"></span></button>
                    <button aria-label="Monitor"><svg viewBox="0 0 22 22"><path d="M11 2v18M2 11h18" stroke="#ddd" stroke-width="3"/></svg></button>
                    <button class="apart" aria-label="Isolate objects"><svg viewBox="0 0 22 22"><path d="M2 2h7v8H2zM5 20l4-6 4 6z" fill="none" stroke="#ccc"/><circle cx="16" cy="11" r="4" fill="none" stroke="#ccc"/></svg></button>
                    <button class="apart" aria-label="Hardware"><svg viewBox="0 0 22 22"><circle cx="12" cy="9" r="9" fill="#2f6fb0"/><path d="M6 0v14M0 7h12" stroke="#dfe8f0" stroke-width="2"/><path d="M0 14h9v8H0z" fill="#f2a93b"/><path d="M9 15l4 5 8-10" fill="none" stroke="#5fce4f" stroke-width="3"/></svg></button>
                    <button class="apart" aria-label="Clean screen"><svg viewBox="0 0 22 22"><path d="M2 4h18v14H2z" fill="none" stroke="#ccc" stroke-width="1.500"/><path d="M12 10l5-4M13 6h4v3M10 12l-5 4M5 13v3h4" fill="none" stroke="#ccc"/></svg></button>
                    <button aria-label="Customization"><svg viewBox="0 0 22 22"><path d="M1 3h20M1 11h20M1 19h20" stroke="#e4e4e4" stroke-width="3"/></svg></button>
                </div>
            </footer>
        </div>

        <div class="taskbar">
            <div class="apps">
                <button aria-label="Start menu"><svg viewBox="0 0 30 30"><path d="M5 7l8-1v8H5zM14 6l11-2v10H14zM5 15h8v8l-8-1zM14 15h11v11l-11-2z" fill="#fff"/></svg></button>
                <button aria-label="Task view"><svg viewBox="0 0 30 30"><path d="M5 9h13v11H5zM5 4v2h13V4M5 25v-2h13v2M23 4v3M23 9v16" fill="none" stroke="#fff" stroke-width="1.500"/><path d="M22 10h3v4h-3z" fill="#fff"/></svg></button>
                <button aria-label="Settings"><svg viewBox="0 0 30 30"><circle cx="15" cy="15" r="7" fill="none" stroke="#fff" stroke-width="3"/><circle cx="15" cy="15" r="10" fill="none" stroke="#fff" stroke-width="3" stroke-dasharray="4 3.850"/></svg></button>
                <button aria-label="Camera"><svg viewBox="0 0 30 30"><rect y="6" width="30" height="22" rx="2" fill="#6b6e7d"/><path d="M8 6l3-4h9l3 4z" fill="#8a8d99"/><circle cx="15" cy="17" r="9" fill="#d6dbe6"/><circle cx="15" cy="17" r="7" fill="#5b58c9"/><circle cx="14" cy="15" r="4" fill="#58aee8"/></svg></button>
                <button aria-label="Remote PC"><svg viewBox="0 0 30 30"><path d="M10 3l19 5-1 15-18-6z" fill="#4db1ea"/><path d="M10 3l19 5-19 9z" fill="#85cdf5"/><path d="M16 20l8 2-2 3-8-3z" fill="#d9e0e4"/><path d="M1 24l7-4 12 4-7 5z" fill="#cdd6cf"/></svg></button>
                <button aria-label="Filmora"><svg viewBox="0 0 30 30"><rect width="30" height="30" rx="5" fill="#1f3144"/><path d="M13 3l4 4-4 4-4-4z" fill="#fff"/><path d="M17 9l4 3-8 8-4-3z" fill="#5fd8bd"/><path d="M0 24h30q0 6-6 6H6q-6 0-6-6z" fill="#fff"/><path d="M12 25l1 3 2-2 2 2 1-3" fill="none" stroke="#111" stroke-width="2"/></svg></button>
                <button aria-label="Outlook"><svg viewBox="0 0 30 30"><path d="M10 2h19v25H10z" fill="#1e8ad6"/><path d="M19 2h10v9H19z" fill="#50c0f3"/><path d="M9 16h20v12H9z" fill="#1467b0"/><path d="M29 16v12H12z" fill="#2f9fe6"/><rect y="8" width="16" height="16" rx="1" fill="#0f5fa8"/><circle cx="8" cy="16" r="4" fill="none" stroke="#fff" stroke-width="2"/></svg></button>
                <button aria-label="University"><svg viewBox="0 0 30 30"><path d="M0 0h30v30H0z" fill="#7d7d7d"/><path d="M7 5h17v11q0 8-8.500 11Q7 24 7 16z" fill="#1c2d8d" stroke="#ddd"/><path d="M7 5h17v6H7z" fill="#e8e4e6"/><path d="M8 5l4 4 3.500-4L19 9l4-4v6H8z" fill="#d02f42"/><path d="M15.500 13v9M11 17h9" stroke="#fff" stroke-width="2.500"/><path d="M10 13h2v2h-2zM19 13h2v2h-2zM12 21h2v2h-2zM17 21h2v2h-2z" fill="#fff"/></svg></button>
                <button aria-label="WeChat"><svg viewBox="0 0 30 30"><ellipse cx="11" cy="12" rx="11" ry="10" fill="#3ecf5a"/><path d="M3 18l-1 6 7-3z" fill="#3ecf5a"/><ellipse cx="21" cy="19" rx="9" ry="8" fill="#f0f0f0"/><path d="M27 24l1 5-6-3z" fill="#f0f0f0"/><circle cx="7" cy="9" r="1.500" fill="#145c22"/><circle cx="14" cy="9" r="1.500" fill="#145c22"/><circle cx="18" cy="17" r="1.200" fill="#777"/><circle cx="24" cy="17" r="1.200" fill="#777"/></svg></button>
                <button class="open" aria-label="File explorer"><svg viewBox="0 0 30 30"><path d="M2 4h10l3 3h13v19H2z" fill="#e8b33a"/><path d="M2 9h26v17H2z" fill="#fbd867"/><path d="M6 17h18v11h-5v-6h-8v6H6z" fill="#4a9bd8"/></svg></button>
                <button class="open" aria-label="Edge"><svg viewBox="0 0 30 30"><circle cx="15" cy="15" r="14.500" fill="url(#edgeBlue)"/><path d="M1 13Q4 .5 15 .5 29 2 29.500 13q0 8-8 8-6 0-4-4 2-5-3-8Q7 7 1 13z" fill="url(#edgeGreen)"/><path d="M12 11q-5 6 0 12 6 5 14 1-4 6-12 5Q5 27 6 18q1-6 6-7z" fill="#134f96"/><path d="M18 16q-3 4 3 5 5 0 8-3-1 4-3 6-8 2-12-4-1-3 4-4z" fill="#0b430b"/></svg></button>
                <button class="open" aria-label="PowerPoint"><svg viewBox="0 0 30 30"><circle cx="16" cy="15" r="14" fill="#d3543a"/><path d="M16 1a14 14 0 0 1 14 14H16z" fill="#f5a080"/><rect y="7" width="16" height="16" rx="1" fill="#b93b22"/><path d="M6 20v-9h3q3 0 3 3t-3 3H6" fill="none" stroke="#fff" stroke-width="2"/></svg></button>
                <button class="open current" aria-label="AutoCAD"><svg viewBox="0 0 30 30"><path d="M2 0h25v22H2z" fill="#e51c4c"/><path d="M4 22h23v8H8l-6-4v-4z" fill="#8f1235"/><path d="M10 17l5-14h1l5 14M12 12h7" fill="none" stroke="#fff" stroke-width="3"/><text class="icon-cad" x="15.500" y="29">CAD</text></svg></button>
            </div>
            <div class="tray">
                <button class="tray-help" aria-label="Help center"><svg viewBox="0 0 28 28"><circle cx="13" cy="14" r="12" fill="#1990d8" stroke="#fff" stroke-width="2"/><path d="M9 11q0-5 5-5t4 5q-1 2-4 4v3M14 20v3" fill="none" stroke="#fff" stroke-width="2.500"/><circle cx="22" cy="22" r="6" fill="#f0a030"/><path d="M22 18v2M22 21v5" stroke="#fff" stroke-width="2"/></svg></button>
                <button aria-label="Autodesk"><svg viewBox="0 0 20 20"><rect x="1" y="2" width="18" height="16" rx="2" fill="#d9d9dc"/><path d="M3 14l7-7h7v7h-4v-3l-4 3z" fill="#222"/></svg></button>
                <button aria-label="Security"><svg viewBox="0 0 20 20"><path d="M10 0l9 3v7q0 7-9 10Q1 17 1 10V3z" fill="#dfe8c8"/><path d="M10 2l7 2v6q0 6-7 8-7-2-7-8V4z" fill="#7cb342"/><path d="M11 4l-4 7h3l-1 5 4-7h-3z" fill="#fff"/></svg></button>
                <button aria-label="Volume"><svg viewBox="0 0 20 20"><path d="M1 7h3l5-4v14l-5-4H1zM12 8q2 2 0 4M14 5q4 5 0 10M17 3q5 7 0 14" fill="none" stroke="#fff"/></svg></button>
                <button aria-label="Battery"><svg viewBox="0 0 20 20"><path d="M5 7h14v9H5zM1 3v4q2 3 4 0V3M3 9v6h2" fill="none" stroke="#fff"/><path d="M7 8h11v7H7z" fill="#fff"/></svg></button>
                <button aria-label="Audio console"><svg viewBox="0 0 20 20"><path d="M1 2h11M1 6h11M1 10h8M11 11h3l5-5v13l-5-4h-3z" fill="none" stroke="#fff" stroke-width="1.300"/></svg></button>
                <button aria-label="Defender"><svg viewBox="0 0 20 20"><path d="M9 0l8 3v6q0 6-8 10Q1 15 1 9V3z" fill="#fff"/><path d="M9 1v17M1 9h16" stroke="#0b430b" stroke-width="1.500"/><circle cx="15" cy="15" r="5" fill="#1f9d55"/><path d="M12 15l2 2 4-4" fill="none" stroke="#fff" stroke-width="1.500"/></svg></button>
                <button aria-label="Bluetooth"><svg viewBox="0 0 20 20"><rect x="3" width="14" height="20" rx="7" fill="#1b78d8"/><path d="M6 6l8 8-4 4V2l4 4-8 8" fill="none" stroke="#fff" stroke-width="1.300"/></svg></button>
                <button aria-label="Safe guard"><svg viewBox="0 0 20 20"><circle cx="10" cy="10" r="10" fill="#f2df2e"/><path d="M0 10A10 10 0 0 1 19 6Q10 0 4 8q-2 5-4 2zM20 11A10 10 0 0 1 3 17q9 4 14-4 1-4 3-2z" fill="#5fb53a"/><path d="M10 6v8M6 10h8" stroke="#176b1c" stroke-width="2"/></svg></button>
                <button aria-label="Wireless"><svg viewBox="0 0 20 20"><path d="M2 18Q3 4 18 3M6 18Q7 8 18 7M10 18q1-6 8-7M14 18q0-3 4-3" fill="none" stroke="#c8d8c8" stroke-width="1.300"/></svg></button>
                <button class="ime">英</button>
                <div class="clock"><span>16:30 周五</span><span>2023/5/12</span></div>
                <button class="tray-wide" aria-label="Media"><svg viewBox="0 0 20 20"><path d="M1 2h18v16H1z" fill="none" stroke="#fff" stroke-width="1.500"/><path d="M8 6l5 4-5 4z" fill="#fff"/></svg></button>
                <button class="tray-wide" aria-label="Notifications"><svg viewBox="0 0 20 20"><path d="M0 1h20v15h-7l-3 4v-4H0z" fill="#fff"/><path d="M4 5h12M4 8h12M4 12h8" stroke="#0b430b" stroke-width="1.500"/></svg></button>
                <span class="show-desktop"></span>
            </div>
        </div>
    </div>
</body>
</html>
```

FILE: styles.css
```css
* {
    box-sizing: border-box;
}

body {
    margin: 0;
    font-family: "Noto Sans", "Noto Sans CJK SC", sans-serif;
    font-size: 15px;
    line-height: 20px;
    color: #f0f0f0;
    background: #222933;
}

button {
    margin: 0;
    padding: 0;
    border: 0;
    background: none;
    color: inherit;
    font: inherit;
    display: flex;
    align-items: center;
    justify-content: center;
}

input {
    border: 0;
    outline: none;
    font: inherit;
}

h1, h2 {
    margin: 0;
    font-size: 15px;
    font-weight: 400;
}

svg {
    display: block;
    flex: none;
}

.defs {
    position: absolute;
    width: 0;
    height: 0;
}

.desktop {
    display: flex;
    flex-direction: column;
    height: 100vh;
    background: linear-gradient(#a04a2c 43px, #e6eef4 43px);
}

.window {
    flex: 1;
    min-height: 0;
    display: flex;
    flex-direction: column;
    margin: 0 2px;
    background: #222933;
    border: 1px solid #23798c;
    border-top: 0;
    border-bottom: 2px solid #2c627c;
}

.window-edge {
    height: 5px;
    border-top: 1px solid #23798c;
    border-bottom: 1px solid #222933;
    background: #0e3344;
}

.caret {
    flex: none;
    display: inline-block;
    border: 3px solid transparent;
    border-top: 4px solid #e4e4e4;
    border-bottom: 0;
}

.caret.wide {
    border-width: 5px;
    border-top-width: 6px;
    border-bottom: 0;
}

.slash {
    width: 1px;
    height: 22px;
    background: #59606b;
    transform: skewX(-20deg);
}

/* title bar */
.titlebar {
    display: flex;
    align-items: center;
    height: 31px;
    padding: 0 7px 6px 4px;
}

.titlebar svg {
    width: 20px;
    height: 20px;
}

.app-logo {
    width: 49px;
    height: 22px;
    background: linear-gradient(90deg, #e51c4c 25px, #8a1236 25px);
    font-weight: 700;
    color: #fff;
}

.app-a {
    width: 25px;
    font-size: 17px;
}

.app-cad {
    width: 24px;
    font-size: 9px;
}

.quick-access {
    display: flex;
    align-items: center;
    gap: 10px;
    margin-left: 11px;
}

.quick-access .slim {
    width: 7px;
    margin: 0 -1px;
}

.quick-access .slim svg {
    width: 11px;
    height: 12px;
}

.dim {
    opacity: .6;
}

.share {
    gap: 5px;
    margin-left: 17px;
    color: #9bd0f7;
    font-size: 16px;
}

.doc-title {
    flex: 1;
    min-width: 0;
    margin-left: 24px;
    white-space: nowrap;
}

.title-tools {
    display: flex;
    align-items: center;
    gap: 8px;
}

.title-tools .slim svg {
    width: 7px;
    height: 12px;
}

.search {
    width: 224px;
    height: 26px;
    padding: 0 5px;
    background: #454e5e;
    color: #f0f0f0;
    font-size: 14px;
    font-style: italic;
}

.search::placeholder {
    color: #b5bac2;
    opacity: 1;
}

.account {
    width: 138px;
    gap: 7px;
    margin-right: 6px;
    justify-content: flex-start;
}

.account .caret {
    margin-left: auto;
}

.with-caret {
    gap: 8px;
}

.divider {
    width: 1px;
    height: 22px;
    margin-left: 4px;
    background: #4b525d;
}

.help-dot {
    width: 20px;
    height: 20px;
    border-radius: 10px;
    background: #d8d8d6;
    color: #3b4453;
    font-weight: 700;
}

.window-buttons {
    display: flex;
    gap: 16px;
    margin-left: 92px;
}

.window-buttons svg {
    width: 16px;
    height: 16px;
}

/* ribbon */
.ribbon-tabs {
    display: flex;
    height: 28px;
    padding: 2px 0 0 7px;
    color: #b4b7bc;
    font-size: 16px;
}

.ribbon-tabs button {
    height: 26px;
    padding: 0 12px 0 11px;
}

.ribbon-tabs .active {
    background: #3b4453;
    color: #f4f4f4;
}

.ribbon-tabs .ribbon-toggle {
    gap: 6px;
    margin-left: 14px;
}

.ribbon-toggle svg {
    width: 18px;
    height: 9px;
}

.ribbon {
    display: flex;
    height: 124px;
    margin: 0 4px;
    background: #3b4453;
}

.panel {
    display: flex;
    flex-direction: column;
    border-right: 1px solid #262d38;
}

.panel-body {
    display: grid;
    height: 101px;
}

.panel h2 {
    display: flex;
    align-items: center;
    justify-content: center;
    gap: 6px;
    height: 22px;
}

.panel-block {
    width: 149px;
}

.panel-block .panel-body {
    grid-template-columns: 52px 1fr;
}

.panel-definition {
    width: 298px;
}

.panel-definition .panel-body {
    grid-template-columns: 80px 78px 86px 1fr;
}

.panel-reference {
    width: 377px;
}

.panel-reference .panel-body {
    grid-template-columns: 58px 48px 52px 1fr;
}

.panel-import {
    width: 364px;
}

.panel-import .panel-body {
    grid-template-columns: 86px 1fr 80px;
}

.panel-data {
    width: 193px;
}

.panel-linking {
    width: 261px;
}

.panel-data .panel-body,
.panel-linking .panel-body {
    grid-template-columns: 50px 1fr;
}

.panel-location {
    width: 92px;
    border-right: 0;
}

.panel-reference h2 {
    position: relative;
    padding-right: 14px;
}

.launcher {
    position: absolute;
    right: 5px;
    top: 8px;
    width: 8px;
    height: 8px;
}

.big {
    flex-direction: column;
    justify-content: flex-start;
    padding-top: 7px;
    text-align: center;
    white-space: nowrap;
}

.big svg {
    width: 40px;
    height: 41px;
    margin-bottom: 5px;
}

.big > .caret {
    margin-top: 3px;
}

.side {
    margin: 0 -10px 8px 4px;
}

.side.far {
    margin: 0 -16px 8px 10px;
}

.side.up {
    margin-bottom: 12px;
}

.lined {
    border-right: 1px solid #2c333f;
    padding-right: 4px;
}

.rows {
    display: flex;
    flex-direction: column;
    padding: 4px 0 0 7px;
    white-space: nowrap;
}

.panel-import .rows {
    padding-left: 13px;
}

.panel-data .rows,
.panel-linking .rows {
    padding-left: 5px;
}

.rows button {
    height: 31px;
    gap: 7px;
    justify-content: flex-start;
}

.rows svg {
    width: 20px;
    height: 20px;
    overflow: visible;
}

.icon-pdf {
    font-size: 7px;
    fill: #ddd;
}

.icon-cad {
    font-size: 7px;
    font-weight: 700;
    text-anchor: middle;
    fill: #fff;
}

/* drawing tabs */
.file-tabs {
    display: flex;
    align-items: center;
    height: 33px;
    padding: 3px 15px 0 19px;
}

.file-tabs button {
    height: 30px;
}

.file-tabs > button:nth-child(2) {
    margin: 0 13px 0 15px;
}

.file-tabs .active {
    width: 340px;
    gap: 8px;
    font-size: 16px;
    font-weight: 700;
    background: #3b4453;
    clip-path: polygon(8px 0, 100% 0, calc(100% - 8px) 100%, 0 100%);
}

.file-tabs .active svg {
    width: 12px;
    height: 12px;
}

.file-tabs .add {
    margin: 0 19px 0 13px;
}

.add svg {
    width: 16px;
    height: 16px;
}

/* drawing area */
.canvas {
    flex: 1;
    min-height: 0;
    position: relative;
    margin: 0 3px 0 4px;
    overflow: hidden;
    border-top: 5px solid #3b4453;
    border-bottom: 5px solid #3b4453;
    background: #212830;
}

.layer {
    position: absolute;
    inset: 0;
    width: 100%;
    height: 100%;
}

.drawing {
    pointer-events: none;
}

.note {
    font-family: "Liberation Sans", sans-serif;
    font-size: 18px;
    text-anchor: middle;
    fill: #fff;
}

.view-label {
    font-size: 14px;
    fill: #e8e8e8;
}

.command-line {
    position: absolute;
    bottom: 1px;
    left: 50%;
    transform: translateX(-50%);
    display: flex;
    align-items: center;
    width: 1134px;
    height: 32px;
    padding-left: 4px;
    background: #2b313d;
}

.grip {
    width: 6px;
    height: 22px;
}

.command-line > button svg {
    width: 12px;
    height: 12px;
    margin-left: 8px;
}

.command-line > button + button svg {
    width: 20px;
    height: 20px;
    margin-left: 13px;
}

.command-box {
    flex: 1;
    display: flex;
    align-items: center;
    height: 32px;
    margin-left: 7px;
    padding: 0 6px;
    border-radius: 2px;
    background: #bfc0c2;
}

.command-box button {
    gap: 3px;
}

.command-box button svg {
    width: 20px;
    height: 16px;
}

.command-box .tiny {
    width: 9px;
    height: 6px;
}

.command-box .caret {
    border-width: 5px;
    border-top: 6px solid #444;
    border-bottom: 0;
}

.command-box input {
    flex: 1;
    padding: 0 8px;
    background: none;
    font: italic 15px "DejaVu Sans Mono", monospace;
}

.command-box input::placeholder {
    color: #4a4c50;
    opacity: 1;
}

.view-buttons {
    position: absolute;
    top: 11px;
    right: 12px;
    display: flex;
    gap: 11px;
}

.view-buttons svg {
    width: 14px;
    height: 14px;
}

.view-cube {
    position: absolute;
    top: 47px;
    right: 0;
    width: 160px;
    height: 520px;
}

.compass {
    font: 700 20px "Liberation Sans", sans-serif;
    text-anchor: middle;
    fill: #a9adb3;
}

.compass.outlined {
    fill: #c9c9c9;
    stroke: #8b8b8b;
}

.cube-top {
    font: 700 13px "Open Sans", sans-serif;
    text-anchor: middle;
    fill: #545a62;
}

.wcs {
    font: 14px "Liberation Sans", sans-serif;
    fill: #85888f;
}

/* status bar */
.status {
    display: flex;
    justify-content: space-between;
    height: 38px;
    padding: 0 5px 0 13px;
}

.layout-tabs {
    display: flex;
    align-items: center;
    height: 32px;
}

.layout-tabs button {
    height: 30px;
    padding: 0 17px 0 13px;
}

.layout-tabs .active {
    width: 88px;
    padding: 0;
    font-weight: 700;
    background: #3b4453;
    clip-path: polygon(9px 0, 100% 0, calc(100% - 9px) 100%, 0 100%);
}

.layout-tabs .add {
    padding: 0 16px;
}

.status-tools {
    display: flex;
    align-items: center;
    height: 32px;
    padding-top: 2px;
}

.status-tools button {
    width: 30px;
    height: 30px;
    background: #343c49;
}

.status-tools svg {
    width: 22px;
    height: 22px;
}

.status-tools .text {
    width: 58px;
    margin-right: 4px;
}

.status-tools .scale {
    width: 40px;
    gap: 5px;
    margin: 0 4px;
    font-size: 14px;
}

.status-tools .on {
    width: 28px;
    background: #5b8cc5;
}

.status-tools .drop {
    width: 51px;
    gap: 8px;
}

.status-tools .drop + .on {
    margin-left: 4px;
}

.status-tools .slim {
    width: 21px;
    margin-right: 4px;
}

.status-tools .apart {
    margin: 0 2px;
}

.status-tools .caret {
    border-width: 4px;
    border-top-width: 6px;
    border-bottom: 0;
}

/* taskbar */
.taskbar {
    display: flex;
    justify-content: space-between;
    height: 50px;
    background: #0b430b;
}

.apps, .tray {
    display: flex;
}

.apps button {
    width: 62px;
    height: 50px;
}

.apps {
    margin-left: -1px;
}

.apps svg {
    width: 30px;
    height: 30px;
}

.apps .open {
    background: linear-gradient(#79bd79, #79bd79) center bottom / 51px 3px no-repeat;
}

.apps .current {
    background-color: #135f13;
    background-size: 62px 3px;
}

.tray {
    align-items: center;
}

.tray button {
    width: 30px;
}

.tray svg {
    width: 20px;
    height: 20px;
}

.tray .tray-help {
    width: 36px;
}

.tray-help svg {
    width: 28px;
    height: 28px;
}

.tray .ime {
    font-size: 19px;
}

.clock {
    display: flex;
    flex-direction: column;
    align-items: center;
    width: 92px;
}

.tray .tray-wide {
    width: 50px;
}

.show-desktop {
    width: 1px;
    height: 50px;
    margin: 0 4px 0 11px;
    background: #4d774d;
}
```
